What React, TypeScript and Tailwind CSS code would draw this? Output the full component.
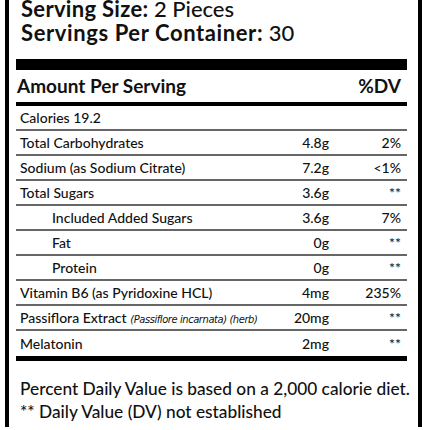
import React from "react";

type Row = {
  name: React.ReactNode;
  amount?: string;
  dv?: string;
  indent?: boolean;
};

const rows: Row[] = [
  { name: "Calories 19.2" },
  { name: "Total Carbohydrates", amount: "4.8g", dv: "2%" },
  { name: "Sodium (as Sodium Citrate)", amount: "7.2g", dv: "<1%" },
  { name: "Total Sugars", amount: "3.6g", dv: "**" },
  { name: "Included Added Sugars", amount: "3.6g", dv: "7%", indent: true },
  { name: "Fat", amount: "0g", dv: "**", indent: true },
  { name: "Protein", amount: "0g", dv: "**", indent: true },
  { name: "Vitamin B6 (as Pyridoxine HCL)", amount: "4mg", dv: "235%" },
  {
    name: (
      <>
        Passiflora Extract{" "}
        <span className="italic text-[11px] tracking-[-0.4px] font-['Liberation_Sans_Narrow','DejaVu_Sans_Condensed',sans-serif]">
          (Passiflore incarnata) (herb)
        </span>
      </>
    ),
    amount: "20mg",
    dv: "**",
  },
  { name: "Melatonin", amount: "2mg", dv: "**" },
];

export default function App() {
  return (
    <div className="w-[430px] h-[430px] overflow-hidden bg-white text-[#111] font-medium font-['Lato',sans-serif]">
      <div className="ml-[5px] w-[417px] h-[430px] border-x-4 border-black">
        {/* Serving info */}
        <div className="-mt-[3px] pl-[12px] text-[22px] leading-[24px]">
          <p>
            <span className="font-bold tracking-[0.3px]">Serving Size:</span> 2 Pieces
          </p>
          <p>
            <span className="font-bold tracking-[0.6px]">Servings Per Container:</span> 30
          </p>
        </div>

        <div className="pl-[7px] pr-[11px] mt-[14px]">
          <div className="h-[11px] bg-black" />

          {/* Header */}
          <div className="flex items-center justify-between h-[32px] pl-[1px] pr-[6px] text-[19px] font-bold">
            <span>Amount Per Serving</span>
            <span>%DV</span>
          </div>
          <div className="h-[4px] bg-black" />

          {/* Rows */}
          {rows.map((row, i) => (
            <div
              key={i}
              className={
                "flex items-center h-[25px] pr-[6px] text-[14px] " +
                (i < rows.length - 1 ? "border-b-2 border-[#666]" : "")
              }
            >
              <span className={"flex-1 " + (row.indent ? "pl-[36px]" : "pl-[4px]")}>
                {row.name}
              </span>
              <span className="w-[60px] text-right">{row.amount}</span>
              <span className="w-[72px] text-right">{row.dv}</span>
            </div>
          ))}
          <div className="h-[5px] bg-black" />
        </div>

        {/* Footnote */}
        <div className="pl-[11px] mt-[16px] text-[17.3px] leading-[23px]">
          <p>Percent Daily Value is based on a 2,000 calorie diet.</p>
          <p>** Daily Value (DV) not established</p>
        </div>
      </div>
    </div>
  );
}
